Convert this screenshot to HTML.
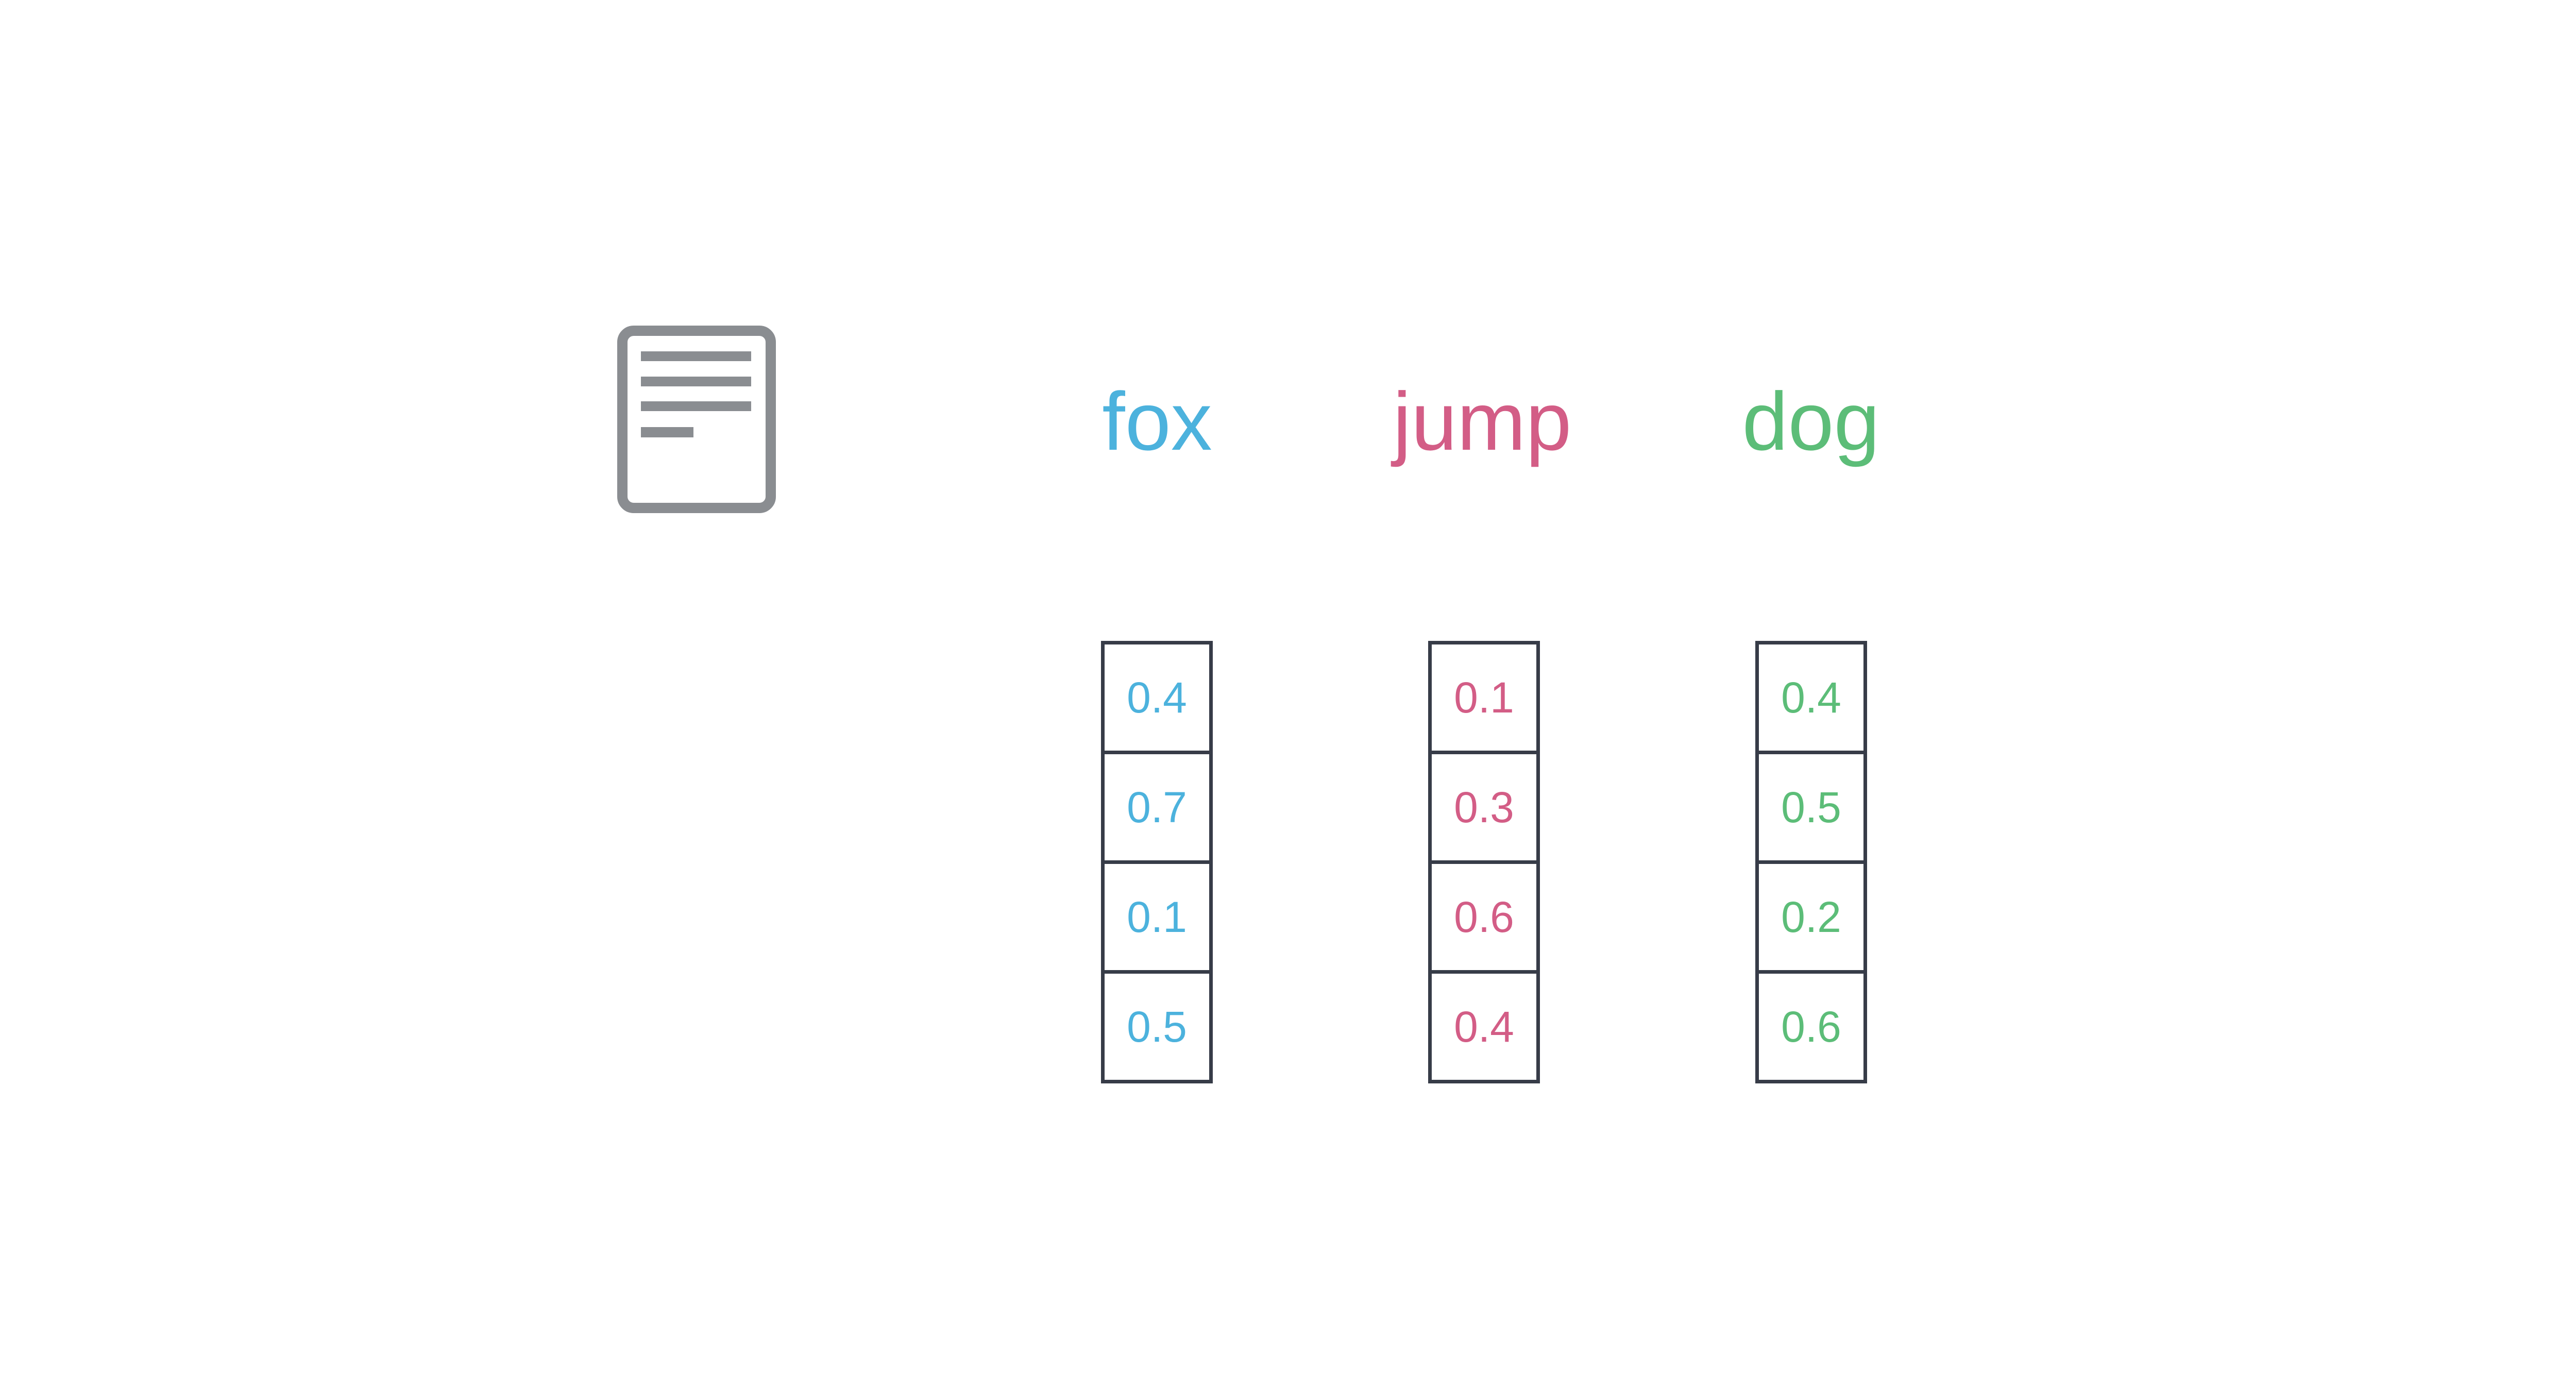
<!DOCTYPE html>
<html><head><style>
html,body{margin:0;padding:0;background:#fff;}
body{width:5006px;height:2702px;position:relative;overflow:hidden;font-family:"Liberation Sans",sans-serif;}
.w{position:absolute;font-size:160px;line-height:1;text-align:center;width:500px;top:738px;}
.col{position:absolute;top:1244px;width:217px;}
.cell{box-sizing:border-box;height:220px;border:7px solid #373c48;margin-top:-7px;display:flex;align-items:center;justify-content:center;font-size:84px;}
.cell:first-child{margin-top:0}
.b{color:#4cb2dd}.p{color:#d35d86}.g{color:#5cbd78}
</style></head><body>
<svg style="position:absolute;left:0;top:0" width="5006" height="2702">
<rect x="1208" y="642" width="288" height="344" rx="22" fill="none" stroke="#8a8d91" stroke-width="20"/>
<rect x="1244" y="682" width="214" height="19" fill="#8a8d91"/>
<rect x="1244" y="731" width="214" height="19" fill="#8a8d91"/>
<rect x="1244" y="779" width="214" height="19" fill="#8a8d91"/>
<rect x="1244" y="829" width="102" height="20" fill="#8a8d91"/>
</svg>
<div class="w b" style="left:1996px">fox</div>
<div class="w p" style="left:2627px">jump</div>
<div class="w g" style="left:3265px">dog</div>
<div class="col" style="left:2137px"><div class="cell b">0.4</div><div class="cell b">0.7</div><div class="cell b">0.1</div><div class="cell b">0.5</div></div>
<div class="col" style="left:2772px"><div class="cell p">0.1</div><div class="cell p">0.3</div><div class="cell p">0.6</div><div class="cell p">0.4</div></div>
<div class="col" style="left:3407px"><div class="cell g">0.4</div><div class="cell g">0.5</div><div class="cell g">0.2</div><div class="cell g">0.6</div></div>
</body></html>
